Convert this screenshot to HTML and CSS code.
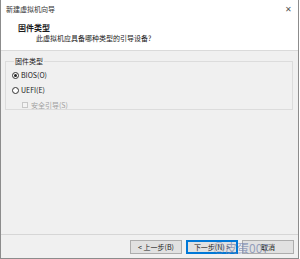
FILE: index.html
```html
<!DOCTYPE html>
<html lang="zh-CN">
    <head>
        <meta charset="UTF-8" />
        <title>新建虚拟机向导</title>
        <link rel="stylesheet" href="styles.css">
    </head>
    <body>
        <div class="window">
            <!-- заголовок окна -->
            <div class="titlebar">
                <span>新建虚拟机向导</span>
                <span class="close">✕</span>
            </div>

            <!-- шапка мастера -->
            <div class="header">
                <div class="header-title">固件类型</div>
                <div class="header-sub">此虚拟机应具备哪种类型的引导设备?</div>
            </div>

            <div class="content">
                <fieldset class="group">
                    <legend>固件类型</legend>
                    <label class="option">
                        <span class="radio checked"></span>
                        <span>BIOS(O)</span>
                    </label>
                    <label class="option">
                        <span class="radio"></span>
                        <span>UEFI(E)</span>
                    </label>
                    <label class="option sub disabled">
                        <span class="check"></span>
                        <span>安全引导(S)</span>
                    </label>
                </fieldset>
            </div>

            <!-- кнопки -->
            <div class="footer">
                <button class="btn">&lt; 上一步(B)</button>
                <button class="btn primary">下一步(N) &gt;</button>
                <button class="btn">取消</button>
                <span class="watermark">◎皮蛋007</span>
            </div>
        </div>
    </body>
</html>
```

FILE: styles.css
```css
* {
    margin: 0;
    padding: 0;
    box-sizing: border-box;
    font-family: "Noto Sans CJK SC", "Noto Sans", sans-serif;
}

body {
    background: white;
}

/* Окно целиком */
.window {
    position: relative;
    width: 299px;
    height: 259px;
    border: 1px solid #8c8c8c;
    border-top: none;
    display: flex;
    flex-direction: column;
    background: #f0f0f0;
    font-size: 7px;
    color: #1a1a1a;
}

/* Заголовок */
.titlebar {
    height: 17px;
    background: white;
    display: flex;
    align-items: center;
    justify-content: space-between;
    padding: 0 6px 0 5px;
    color: #333;
}
.close {
    font-size: 8px;
    color: #555;
}

/* Шапка */
.header {
    height: 34px;
    background: white;
    border-bottom: 1px solid #dadada;
    padding: 5px 0 0 17px;
}
.header-title {
    font-size: 8px;
    font-weight: bold;
    line-height: 11px;
}
.header-sub {
    margin: 0 0 0 18px;
    line-height: 10px;
}

/* Основная часть */
.content {
    flex: 1;
    padding: 6px 5px 0 4px;
}
.group {
    border: 1px solid #dcdcdc;
    height: 53px;
    padding: 4px 0 0 6px;
    display: flex;
    flex-direction: column;
    gap: 5px;
}
.group legend {
    margin-left: 2px;
    padding: 0 1px;
    line-height: 9px;
}
.option {
    display: flex;
    align-items: center;
    gap: 2px;
    height: 10px;
    line-height: 10px;
}
.option.sub {
    margin-left: 10px;
    gap: 3px;
}
.disabled {
    color: #a0a0a0;
}
.radio {
    width: 7px;
    height: 7px;
    border: 1px solid #333;
    border-radius: 50%;
    background: white;
    display: flex;
    align-items: center;
    justify-content: center;
}
.radio.checked::after {
    content: "";
    width: 3px;
    height: 3px;
    border-radius: 50%;
    background: #222;
}
.check {
    width: 6px;
    height: 6px;
    border: 1px solid #c8c8c8;
    background: #f4f4f4;
}

/* Низ с кнопками */
.footer {
    height: 24px;
    border-top: 1px solid #d6d6d6;
    display: flex;
    justify-content: flex-end;
    align-items: flex-start;
    gap: 4px;
    padding: 5px 4px 0 0;
}
.btn {
    width: 52px;
    height: 14px;
    border: 1px solid #adadad;
    background: #e1e1e1;
    font-size: 7px;
    color: #1a1a1a;
}
.btn.primary {
    border-color: #0078d7;
    box-shadow: inset 0 0 0 1px #0078d7;
}

/* Водяной знак поверх кнопок */
.watermark {
    position: absolute;
    z-index: 2;
    left: 212px;
    bottom: 2px;
    font-size: 12px;
    line-height: 16px;
    color: rgba(120, 135, 175, 0.75);
    pointer-events: none;
}
```
